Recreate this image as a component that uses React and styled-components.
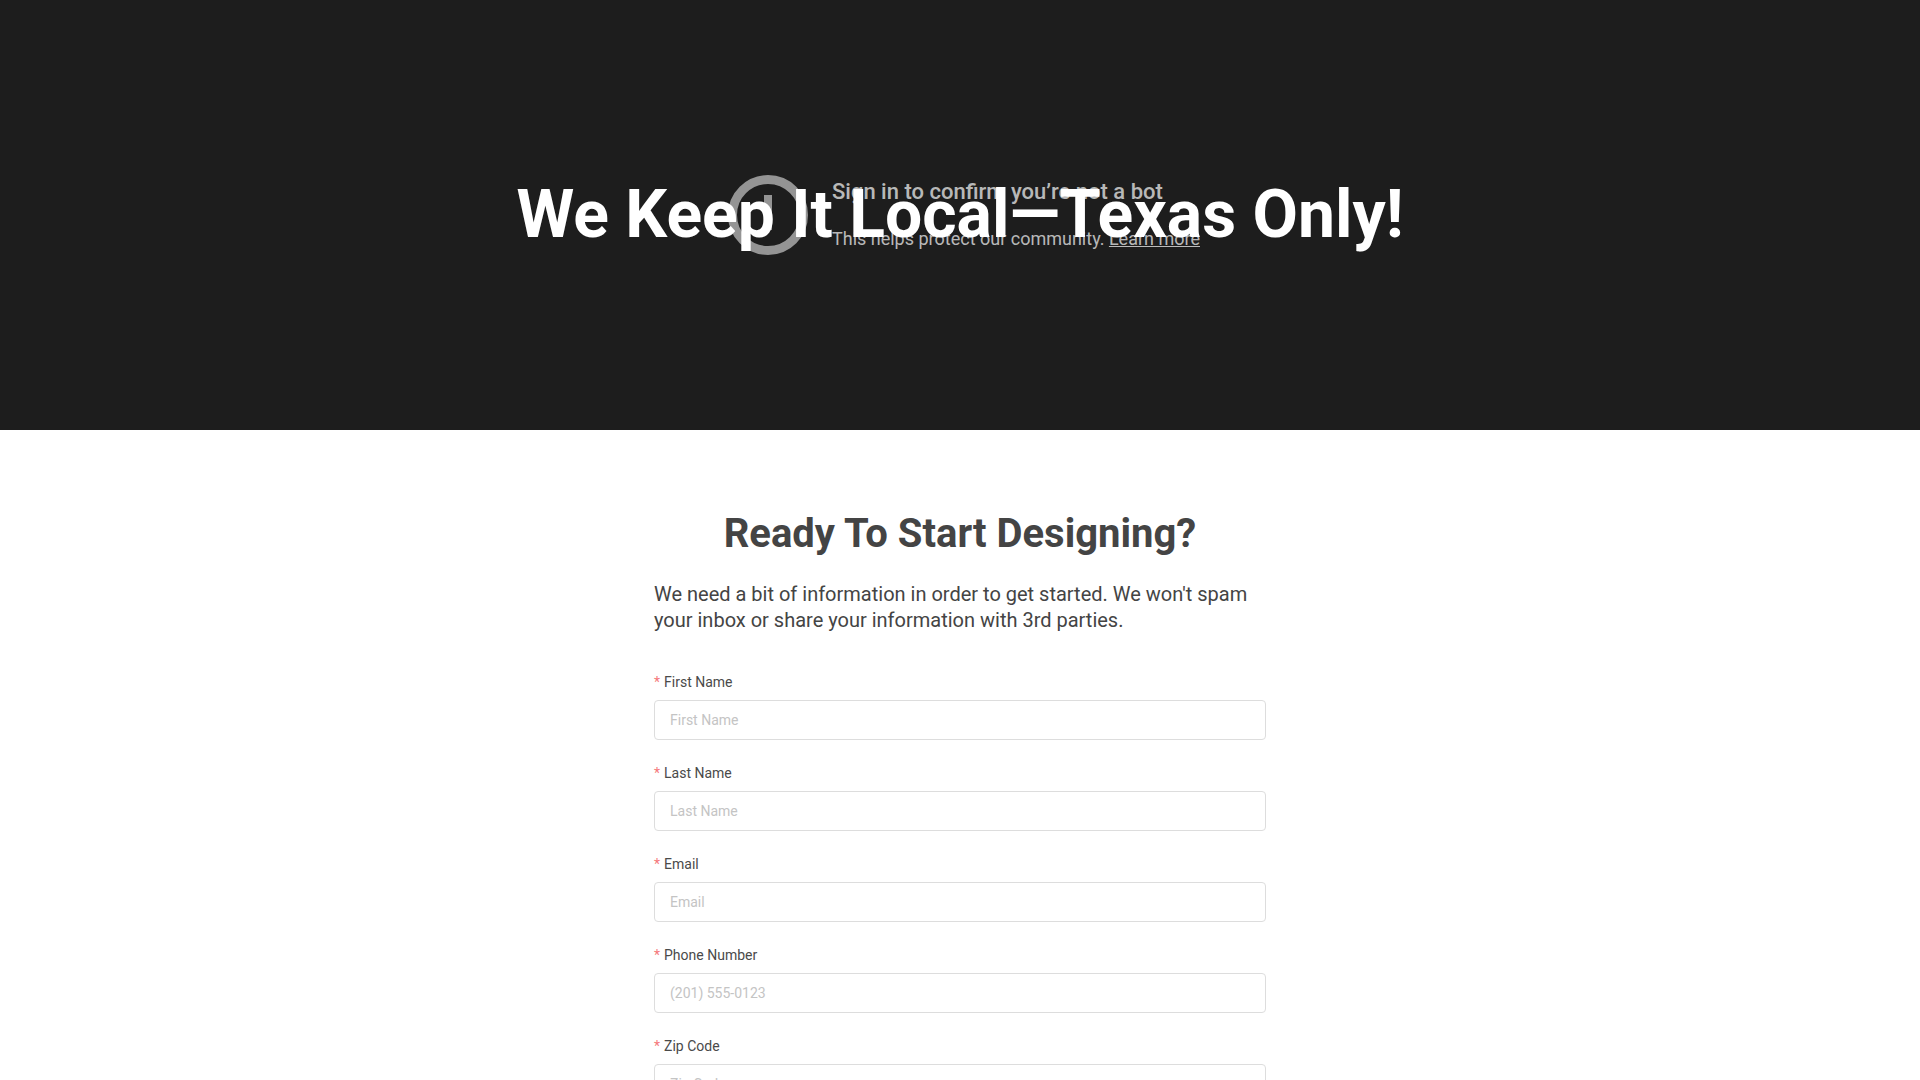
import React from 'react';
import styled, {createGlobalStyle} from 'styled-components';

const GlobalStyle = createGlobalStyle`
    html, body {
        margin: 0;
        height: 100%;
        overflow: hidden;
        background: white;
        font-family: Roboto, "Liberation Sans", sans-serif;
    }
`;

const Hero = styled.section`
    position: relative;
    height: 430px;
    background: #1d1d1d;
    display: flex;
    align-items: center;
    justify-content: center;
`;

const BotNotice = styled.div`
    position: absolute;
    top: 175px;
    left: 728px;
    display: flex;
    gap: 24px;
    color: rgba(255, 255, 255, 0.7);
`;

const NoticeText = styled.div`
    display: flex;
    flex-direction: column;
    gap: 21px;
    padding-top: 3px;
`;

const NoticeTitle = styled.div`
    font-size: 22px;
    line-height: 28px;
    font-weight: 500;
`;

const NoticeBody = styled.div`
    font-size: 18px;
    line-height: 24px;

    a {
        color: inherit;
        text-decoration: underline;
    }
`;

const HeroTitle = styled.h1`
    position: relative;
    margin: 0;
    color: white;
    font-size: 66px;
    line-height: 78px;
    font-weight: 700;
`;

const Main = styled.main`
    width: 612px;
    margin: 0 auto;
    padding-top: 80px;
`;

const Heading = styled.h2`
    margin: 0 0 23px;
    color: #444444;
    font-size: 40px;
    line-height: 48px;
    font-weight: 700;
    text-align: center;
`;

const Intro = styled.p`
    margin: 0 0 40px;
    color: #444444;
    font-size: 20px;
    line-height: 26px;
`;

const Form = styled.form`
    display: flex;
    flex-direction: column;
    gap: 24px;
`;

const Field = styled.div`
    display: flex;
    flex-direction: column;
    gap: 8px;
`;

const Label = styled.label`
    color: #4a4a4a;
    font-size: 14px;
    line-height: 19px;

    &::before {
        content: "*";
        color: #f5787a;
        margin-right: 4px;
    }
`;

const Input = styled.input`
    box-sizing: border-box;
    width: 100%;
    height: 40px;
    padding: 0 15px;
    background: white;
    border: 1px solid #dddddd;
    border-radius: 4px;
    font-family: inherit;
    font-size: 14px;
    color: #444444;

    &::placeholder {
        color: #c4c4c4;
        opacity: 1;
    }
`;

const fields = [
    {label: "First Name", placeholder: "First Name"},
    {label: "Last Name", placeholder: "Last Name"},
    {label: "Email", placeholder: "Email"},
    {label: "Phone Number", placeholder: "(201) 555-0123"},
    {label: "Zip Code", placeholder: "Zip Code"},
];

const NoticeIcon = () => (
    <svg width="80" height="80" viewBox="0 0 80 80" fill="none">
        <circle cx="40" cy="40" r="35.5" stroke="#949494" strokeWidth="9"/>
        <rect x="36" y="20" width="8" height="35" fill="#949494"/>
    </svg>
);

const App = () => (
    <>
        <GlobalStyle/>
        <Hero>
            <BotNotice>
                <NoticeIcon/>
                <NoticeText>
                    <NoticeTitle>Sign in to confirm you’re not a bot</NoticeTitle>
                    <NoticeBody>This helps protect our community. <a href="#learn">Learn more</a></NoticeBody>
                </NoticeText>
            </BotNotice>
            <HeroTitle>We Keep It Local—Texas Only!</HeroTitle>
        </Hero>
        <Main>
            <Heading>Ready To Start Designing?</Heading>
            <Intro>We need a bit of information in order to get started. We won't spam your inbox or share your information with 3rd parties.</Intro>
            <Form>
                {fields.map(field => (
                    <Field key={field.label}>
                        <Label>{field.label}</Label>
                        <Input placeholder={field.placeholder}/>
                    </Field>
                ))}
            </Form>
        </Main>
    </>
);

export default App;
